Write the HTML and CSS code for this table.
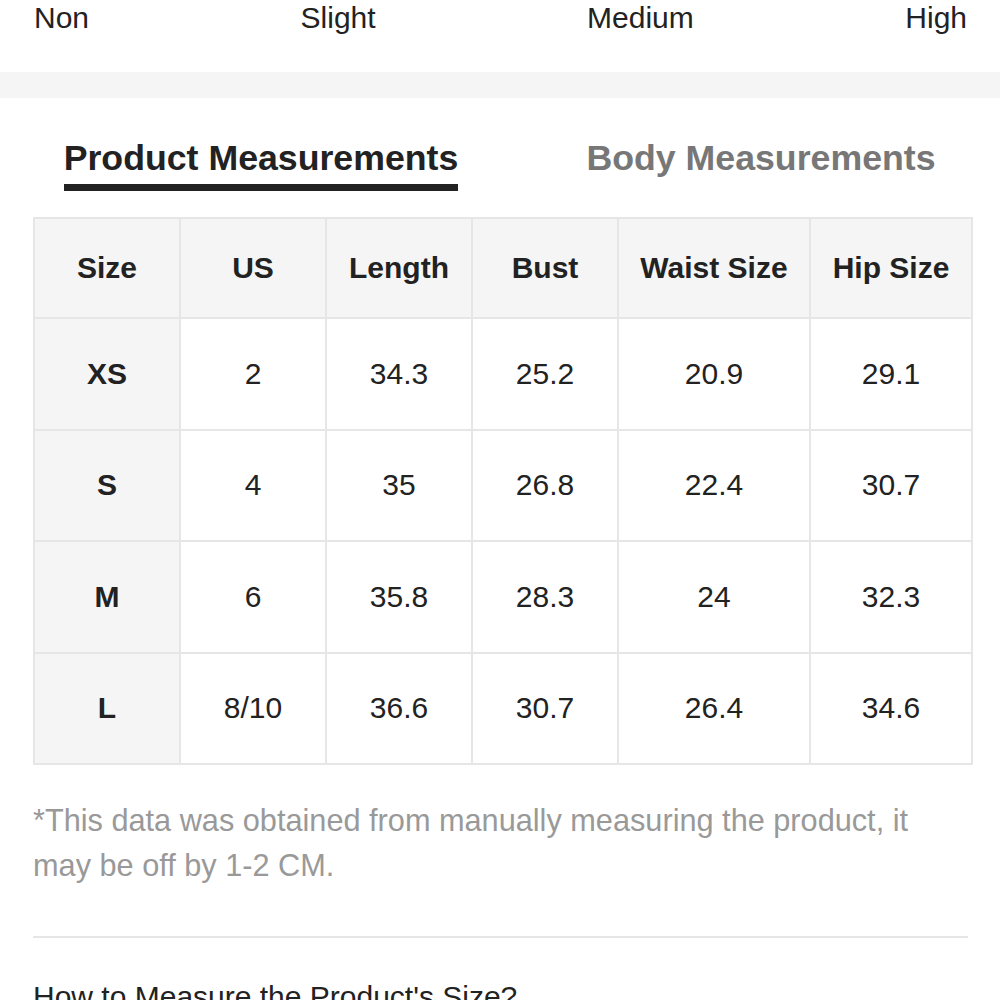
FILE: index.html
```html
<!DOCTYPE html>
<html>
<head>
<meta charset="utf-8">
<link rel="stylesheet" href="styles.css">
</head>
<body>
<div class="page">
  <div class="levels">
    <span>Non</span><span>Slight</span><span>Medium</span><span>High</span>
  </div>
  <div class="band"></div>
  <div class="tabs">
    <div class="tab"><span class="tab-label active">Product Measurements</span></div>
    <div class="tab"><span class="tab-label">Body Measurements</span></div>
  </div>
  <table class="sizes">
    <colgroup>
      <col class="c-std"><col class="c-std"><col class="c-std"><col class="c-std"><col class="c-wide"><col class="c-mid">
    </colgroup>
    <thead>
      <tr><th>Size</th><th>US</th><th>Length</th><th>Bust</th><th>Waist Size</th><th>Hip Size</th></tr>
    </thead>
    <tbody>
      <tr><th>XS</th><td>2</td><td>34.3</td><td>25.2</td><td>20.9</td><td>29.1</td></tr>
      <tr><th>S</th><td>4</td><td>35</td><td>26.8</td><td>22.4</td><td>30.7</td></tr>
      <tr><th>M</th><td>6</td><td>35.8</td><td>28.3</td><td>24</td><td>32.3</td></tr>
      <tr><th>L</th><td>8/10</td><td>36.6</td><td>30.7</td><td>26.4</td><td>34.6</td></tr>
    </tbody>
  </table>
  <p class="note">*This data was obtained from manually measuring the product, it may be off by 1-2 CM.</p>
  <hr class="divider">
  <p class="howto">How to Measure the Product's Size?</p>
</div>
</body>
</html>
```
FILE: styles.css
```css
html, body {
  margin: 0;
  padding: 0;
  background: #fff;
}
body {
  width: 1000px;
  height: 1000px;
  overflow: hidden;
  font-family: "Liberation Sans", Arial, Helvetica, sans-serif;
  color: #222;
}
.page {
  display: flex;
  flex-direction: column;
}
.levels {
  display: flex;
  justify-content: space-between;
  padding: 0 33px 0 34px;
  font-size: 30px;
  line-height: 36px;
  color: #222;
}
.band {
  margin-top: 36px;
  height: 26px;
  background: #f5f5f5;
}
.tabs {
  display: grid;
  grid-template-columns: 500px 500px;
  margin-left: 11px;
  margin-top: 38px;
}
.tab {
  display: flex;
  justify-content: center;
}
.tab-label {
  font-size: 35.7px;
  line-height: 44px;
  font-weight: bold;
  color: #777;
  padding-bottom: 4px;
  border-bottom: 7px solid transparent;
}
.tab-label.active {
  color: #222;
  border-bottom-color: #222;
}
.sizes {
  margin: 26px 0 0 33px;
  width: 938px;
  border-collapse: collapse;
  table-layout: fixed;
  font-size: 30px;
}
.c-std { width: 146px; }
.c-wide { width: 192px; }
.c-mid { width: 162px; }
.sizes th, .sizes td {
  border: 2px solid #e6e6e6;
  text-align: center;
  vertical-align: middle;
  padding: 0;
  color: #222;
}
.sizes th {
  font-weight: bold;
  background: #f5f5f5;
}
.sizes td {
  font-weight: normal;
  background: #fff;
}
.sizes thead th {
  height: 98px;
}
.sizes tbody th, .sizes tbody td {
  height: 109.5px;
}
.note {
  margin: 33px 0 0 33px;
  width: 920px;
  font-size: 30.7px;
  line-height: 45px;
  color: #999;
}
.divider {
  margin: 48px 32px 0 33px;
  border: 0;
  height: 2px;
  background: #e6e6e6;
}
.howto {
  margin: 41px 0 0 33px;
  font-size: 30px;
  line-height: 36px;
  color: #222;
}
```
